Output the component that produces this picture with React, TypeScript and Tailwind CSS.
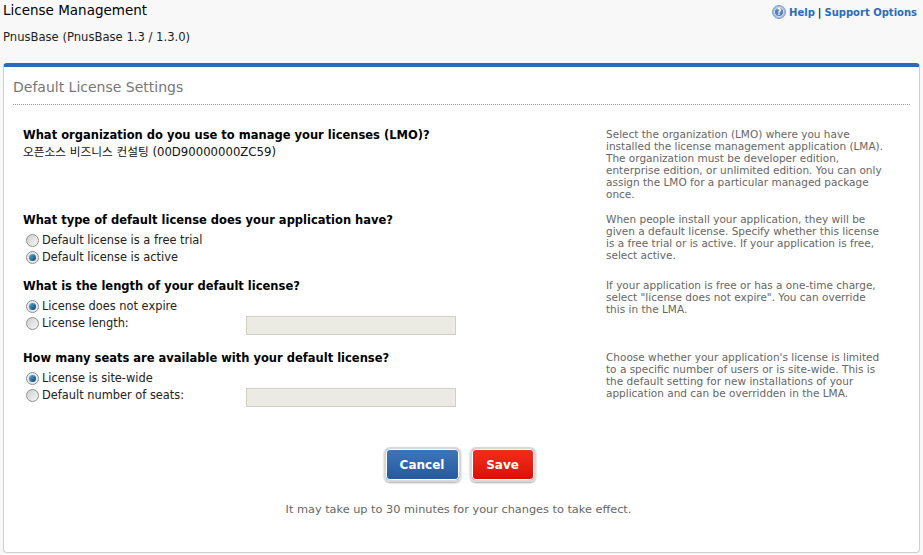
import React from "react";

const font = "font-['DejaVu_Sans','Noto_Sans_CJK_KR',sans-serif]";

function Radio({ checked }: { checked?: boolean }) {
  return (
    <span
      className={`inline-flex h-[13px] w-[13px] shrink-0 items-center justify-center rounded-full border border-[#8e8f8f] ${
        checked ? "bg-[#e8e8e8]" : "bg-gradient-to-br from-[#cfd0d0] to-[#f6f6f6]"
      }`}
    >
      {checked && (
        <span className="h-[7px] w-[7px] rounded-full bg-gradient-to-br from-[#5fb0dc] to-[#06426e]" />
      )}
    </span>
  );
}

function Option({ label, checked, input }: { label: string; checked?: boolean; input?: boolean }) {
  return (
    <div className="flex h-[17px] items-center text-[11.4px] text-[#222]">
      <span className="ml-[3px] mr-[3px] flex">
        <Radio checked={checked} />
      </span>
      <span className="w-[204px] whitespace-nowrap">{label}</span>
      {input && <div className="-mb-[3px] h-[19px] w-[210px] border border-[#cfcfc8] bg-[#ebebe4]" />}
    </div>
  );
}

function Row({
  title,
  help,
  height,
  children,
}: {
  title: string;
  help: string[];
  height: string;
  children: React.ReactNode;
}) {
  return (
    <div className={`flex ${height}`}>
      <div className="w-[583px]">
        <div className="mb-[4px] text-[11.5px] leading-[16px] font-bold text-black">{title}</div>
        {children}
      </div>
      <div className="pt-[1px] text-[10.5px] leading-[12px] text-[#666]">
        {help.map((line) => (
          <div key={line} className="whitespace-nowrap">{line}</div>
        ))}
      </div>
    </div>
  );
}

export default function App() {
  return (
    <div className={`${font} h-[555px] w-[923px] overflow-hidden bg-[#f8f8f8]`}>
      <header className="flex h-[63px] justify-between px-[3px]">
        <div>
          <h1 className="pt-[2px] text-[13.5px] leading-[17px] text-black">License Management</h1>
          <p className="mt-[11px] text-[11.6px] leading-[14px] text-[#222]">PnusBase (PnusBase 1.3 / 1.3.0)</p>
        </div>
        <div className="flex h-[24px] items-center pr-[3px] text-[10px] font-bold text-[#2a6cbb]">
          <svg width="14" height="14" viewBox="0 0 14 14" className="mr-[3px]">
            <circle cx="7" cy="7" r="6.5" fill="#a3bfe0" stroke="#7f9fca" />
            <circle cx="7" cy="7" r="4.6" fill="#5582bd" stroke="#d4e1f0" />
            <text x="7" y="10" textAnchor="middle" fontSize="8" fontWeight="700" fill="#fff">?</text>
          </svg>
          <span>Help</span>
          <span className="mx-[3px] text-[#222]">|</span>
          <span>Support Options</span>
        </div>
      </header>
      <main className="mx-[3px] h-[490px] w-[917px] rounded-[4px] border border-t-4 border-[#cfcfcf] border-t-[#2a6cbb] bg-white">
        <div className="mx-[9px] border-b border-dotted border-[#999] pt-[11px] pb-[7px] text-[14px] leading-[19px] text-[#777]">
          Default License Settings
        </div>
        <div className="pt-[22px] pl-[19px]">
          <Row
            title="What organization do you use to manage your licenses (LMO)?"
            height="h-[85px]"
            help={[
              "Select the organization (LMO) where you have",
              "installed the license management application (LMA).",
              "The organization must be developer edition,",
              "enterprise edition, or unlimited edition. You can only",
              "assign the LMO for a particular managed package",
              "once.",
            ]}
          >
            <div className="-mt-[2px] text-[11.7px] leading-[15px] text-[#111]">오픈소스 비즈니스 컨설팅 (00D90000000ZC59)</div>
          </Row>
          <Row
            title="What type of default license does your application have?"
            height="h-[66px]"
            help={[
              "When people install your application, they will be",
              "given a default license. Specify whether this license",
              "is a free trial or is active. If your application is free,",
              "select active.",
            ]}
          >
            <Option label="Default license is a free trial" />
            <Option label="Default license is active" checked />
          </Row>
          <Row
            title="What is the length of your default license?"
            height="h-[72px]"
            help={[
              "If your application is free or has a one-time charge,",
              'select "license does not expire". You can override',
              "this in the LMA.",
            ]}
          >
            <Option label="License does not expire" checked />
            <Option label="License length:" input />
          </Row>
          <Row
            title="How many seats are available with your default license?"
            height="h-[97px]"
            help={[
              "Choose whether your application's license is limited",
              "to a specific number of users or is site-wide. This is",
              "the default setting for new installations of your",
              "application and can be overridden in the LMA.",
            ]}
          >
            <Option label="License is site-wide" checked />
            <Option label="Default number of seats:" input />
          </Row>
        </div>
        <div className="flex justify-center gap-[9px] pr-[4px]">
          <button className="h-[35px] w-[77px] rounded-[6px] border-2 border-[#d8d8d8] bg-gradient-to-b from-[#3f76bb] to-[#25589c] text-[12px] font-bold text-white shadow-[0_1px_2px_#aaa] ring-1 ring-white ring-inset">
            Cancel
          </button>
          <button className="h-[35px] w-[66px] rounded-[6px] border-2 border-[#d8d8d8] bg-gradient-to-b from-[#f32c1e] to-[#d90f00] text-[12px] font-bold text-white shadow-[0_1px_2px_#aaa] ring-1 ring-white ring-inset">
            Save
          </button>
        </div>
        <p className="mt-[21px] pr-[6px] text-center text-[11.3px] leading-[14px] text-[#666]">
          It may take up to 30 minutes for your changes to take effect.
        </p>
      </main>
    </div>
  );
}
